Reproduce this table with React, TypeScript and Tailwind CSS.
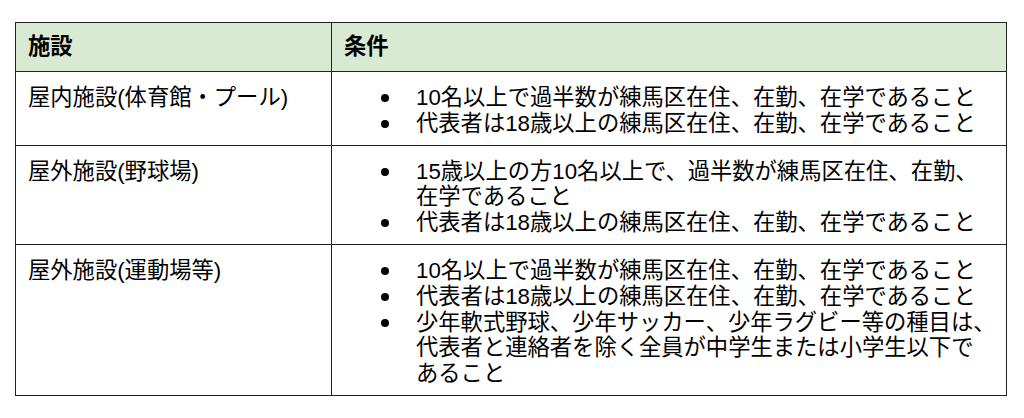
import React from "react";

const rows: { name: string; items: string[][] }[] = [
  {
    name: "屋内施設(体育館・プール)",
    items: [
      ["10名以上で過半数が練馬区在住、在勤、在学であること"],
      ["代表者は18歳以上の練馬区在住、在勤、在学であること"],
    ],
  },
  {
    name: "屋外施設(野球場)",
    items: [
      ["15歳以上の方10名以上で、過半数が練馬区在住、在勤、", "在学であること"],
      ["代表者は18歳以上の練馬区在住、在勤、在学であること"],
    ],
  },
  {
    name: "屋外施設(運動場等)",
    items: [
      ["10名以上で過半数が練馬区在住、在勤、在学であること"],
      ["代表者は18歳以上の練馬区在住、在勤、在学であること"],
      [
        "少年軟式野球、少年サッカー、少年ラグビー等の種目は、",
        "代表者と連絡者を除く全員が中学生または小学生以下で",
        "あること",
      ],
    ],
  },
];

export default function App() {
  return (
    <div
      className="w-[1024px] h-[418px] bg-white text-black pt-[22px] pl-[15px]"
      style={{ fontFamily: '"Liberation Sans", "Noto Sans CJK JP", sans-serif' }}
    >
      <div className="w-[992px] grid grid-cols-[316px_1fr] border-t border-l border-[#222] text-[22.3px] leading-[25.8px]">
        <div className="bg-[#d9ead3] border-r border-b border-[#222] h-[49px] px-[12px] flex items-center font-bold">
          施設
        </div>
        <div className="bg-[#d9ead3] border-r border-b border-[#222] h-[49px] px-[12px] flex items-center font-bold">
          条件
        </div>
        {rows.map((r) => (
          <React.Fragment key={r.name}>
            <div className="border-r border-b border-[#222] pl-[12px] pt-[13px] pb-[8px]">
              {r.name}
            </div>
            <div className="border-r border-b border-[#222] pt-[13px] pb-[8px]">
              <ul className="pl-[84px]">
                {r.items.map((lines, i) => (
                  <li key={i} className="relative">
                    <span className="absolute left-[-35px] top-[9px] w-[8px] h-[8px] rounded-full bg-black" />
                    {lines.map((l, j) => (
                      <div key={j} className="whitespace-nowrap">
                        {l}
                      </div>
                    ))}
                  </li>
                ))}
              </ul>
            </div>
          </React.Fragment>
        ))}
      </div>
    </div>
  );
}
